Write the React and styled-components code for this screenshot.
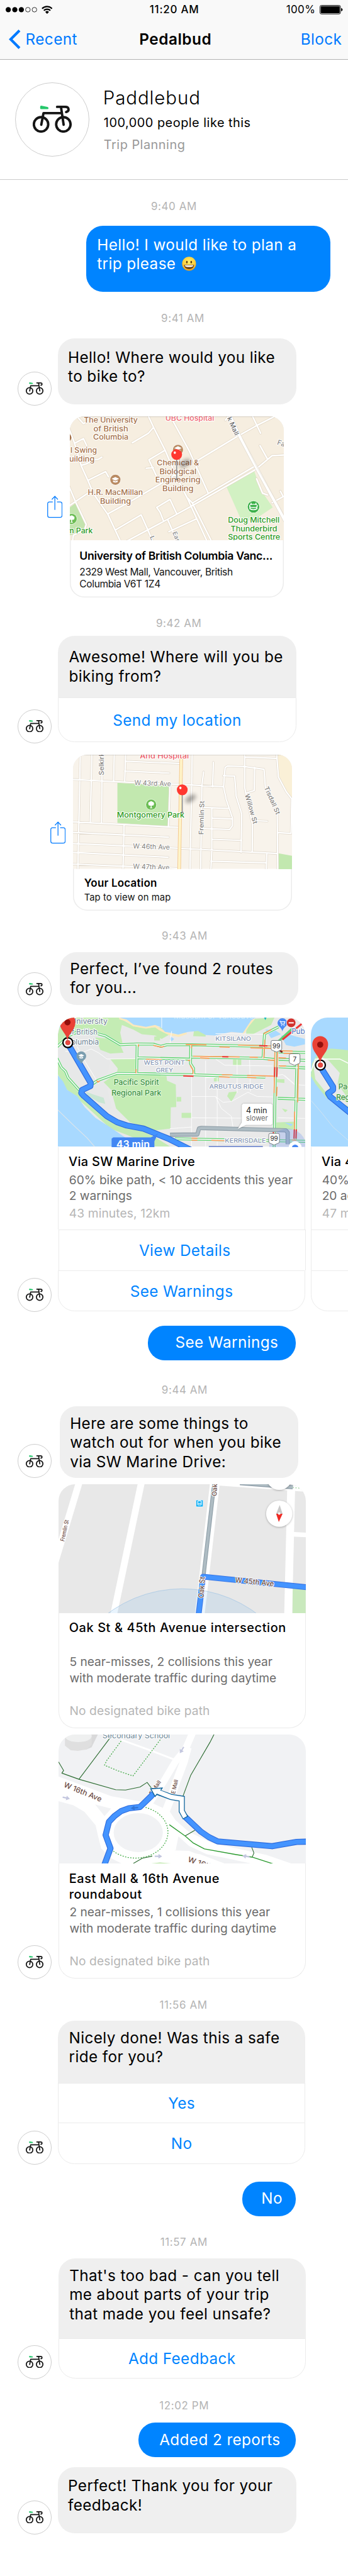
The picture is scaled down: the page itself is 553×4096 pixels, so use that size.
import React from "react";
import styled, { createGlobalStyle, css } from "styled-components";

/* ------------------------------------------------------------------ */
/* Theme                                                               */
/* ------------------------------------------------------------------ */

const color = {
  blue: "#0084ff",
  navBlue: "#007aff",
  bubble: "#efefef",
  line: "#ebebeb",
  time: "#b4b4b4",
  body: "#6c6c6c",
  meta: "#b6b6b6",
};

const font = `Inter, "Liberation Sans", sans-serif`;

const GlobalStyle = createGlobalStyle`
  * { box-sizing: border-box; }
  html, body { margin: 0; background: #fff; overflow-x: hidden; }
  body { font-family: ${font}; color: #000; }
  svg { display: block; flex: none; }
`;

/* The thread is authored on a 750 unit wide artboard. */
const Screen = styled.main`
  zoom: 0.73775;
  width: 749.5px;
  min-height: 5552px;
  background: #fff;
  overflow: hidden;
`;

/* ------------------------------------------------------------------ */
/* Header                                                              */
/* ------------------------------------------------------------------ */

const Header = styled.header`
  height: 129px;
  background: #f9f9f9;
  border-bottom: 2px solid #b2b2b2;
`;

const Bar = styled.div`
  display: grid;
  grid-template-columns: 1fr auto 1fr;
  align-items: center;
`;

const StatusBar = styled(Bar)`
  height: 41.6px;
  padding: 0 11px 0 12.7px;
  font-size: 23px;
  letter-spacing: 0.6px;
`;

const NavBar = styled(Bar)`
  height: 85px;
  padding: 0 13px 0 19px;
  font-size: 33px;
  letter-spacing: 0.55px;
`;

const Side = styled.div`
  display: flex;
  align-items: center;
  justify-content: ${(p) => (p.$end ? "flex-end" : "flex-start")};
  gap: ${(p) => p.$gap || 0}px;
  color: ${(p) => (p.$link ? color.navBlue : "#000")};
`;

const Clock = styled.span`
  font-weight: 500;
  letter-spacing: 1px;
`;

const NavTitle = styled.h1`
  margin: 0;
  font-size: 33px;
  font-weight: 600;
  letter-spacing: 0.7px;
`;

const Profile = styled.section`
  display: flex;
  height: 258.5px;
  padding: 48px 32px 0;
  gap: 29.5px;
  border-bottom: 2px solid #cbcbcb;
`;

const ProfileText = styled.div`
  padding-top: 10.4px;
`;

const ProfileName = styled.h2`
  margin: 0;
  font-size: 40px;
  line-height: 48px;
  font-weight: 300;
  letter-spacing: 1.2px;
`;

const ProfileLine = styled.p`
  margin: 11.4px 0 0 1.5px;
  font-size: 27px;
  line-height: 36px;
  font-weight: 400;
  letter-spacing: 0.66px;
  color: ${(p) => (p.$muted ? "#999" : "#000")};
`;

/* ------------------------------------------------------------------ */
/* Thread                                                              */
/* ------------------------------------------------------------------ */

const Time = styled.time`
  display: block;
  margin-top: ${(p) => p.$top}px;
  padding-left: ${(p) => p.$shift || 0}px;
  font-size: 23px;
  line-height: 28px;
  letter-spacing: 0.8px;
  text-align: center;
  color: ${color.time};
`;

const Row = styled.div`
  display: flex;
  align-items: ${(p) => p.$align || "flex-end"};
  margin-top: ${(p) => p.$top}px;
  padding-left: ${(p) => p.$left ?? 38.3}px;
  gap: ${(p) => p.$gap ?? 13.5}px;
`;

const UserRow = styled.div`
  display: flex;
  justify-content: flex-end;
  margin-top: ${(p) => p.$top}px;
  padding-right: ${(p) => p.$right ?? 112}px;
`;

const AvatarRing = styled.div`
  flex: none;
  display: grid;
  place-items: center;
  width: ${(p) => p.$size}px;
  height: ${(p) => p.$size}px;
  margin-bottom: ${(p) => p.$drop || 0}px;
  border: 1.4px solid #cdcdcd;
  border-radius: 50%;
`;

const messageText = css`
  font-size: 33px;
  line-height: 41.6px;
  letter-spacing: 0.52px;
  white-space: pre-line;
`;

const BotBubble = styled.div`
  width: 513.2px;
  height: ${(p) => p.$height}px;
  padding: ${(p) => p.$pad}px 10px 0 21.5px;
  background: ${color.bubble};
  border-radius: 36px;
  ${messageText}
`;

const UserBubble = styled.div`
  width: ${(p) => p.$width}px;
  height: 74.8px;
  padding: 15.8px ${(p) => p.$end}px 0 0;
  background: ${color.blue};
  border-radius: 36px;
  color: #fff;
  text-align: right;
  ${messageText}
`;

const UserParagraph = styled(UserBubble)`
  height: 141.7px;
  padding: 19.5px 20px 0 23.5px;
  text-align: left;
`;

const InlineEmoji = styled.span`
  display: inline-block;
  vertical-align: -4px;
  margin-left: 3px;
`;

const Prompt = styled.div`
  width: ${(p) => p.$width}px;
`;

const PromptText = styled.div`
  height: ${(p) => p.$height}px;
  padding: ${(p) => p.$pad}px 10px 0 23.5px;
  background: ${color.bubble};
  border-radius: 36px 36px 0 0;
  ${messageText}
`;

const Action = styled.button`
  display: flex;
  align-items: center;
  justify-content: center;
  width: 100%;
  height: ${(p) => p.$height}px;
  margin: 0 0 0 ${(p) => p.$nudge || 0}px;
  padding: 0 0 0 ${(p) => p.$indent || 0}px;
  background: #fff;
  border: 2px solid ${color.line};
  border-bottom-width: ${(p) => (p.$last ? 2 : 0)}px;
  border-radius: ${(p) => (p.$last ? "0 0 36px 36px" : 0)};
  font: 400 33px ${font};
  letter-spacing: 0.5px;
  color: ${color.blue};
`;

/* Location card */

const PlaceCard = styled.article`
  width: ${(p) => p.$width}px;
  height: ${(p) => p.$height}px;
  border-radius: 31px;
  overflow: hidden;
  background: #fff;
  box-shadow: inset 0 0 0 2px #ececec;
`;

const PlaceCaption = styled.div`
  padding: ${(p) => (p.$small ? 15.9 : 19.2)}px 0 0 ${(p) => (p.$small ? 23.5 : 21)}px;
  white-space: nowrap;
`;

const PlaceTitle = styled.h3`
  margin: 0;
  font-size: ${(p) => (p.$small ? 23 : 24)}px;
  line-height: 30px;
  font-weight: 600;
  letter-spacing: ${(p) => (p.$small ? 0.3 : -0.43)}px;
`;

const PlaceAddress = styled.p`
  margin: ${(p) => (p.$small ? 3.5 : 5.8)}px 0 0;
  font-size: ${(p) => (p.$small ? 20 : 21)}px;
  line-height: 26px;
  letter-spacing: ${(p) => (p.$small ? 0.12 : -0.45)}px;
  white-space: pre-line;
  color: #111;
`;

/* Route and warning cards */

const Carousel = styled.div`
  display: flex;
  gap: 12.4px;
`;

const InfoCard = styled.article`
  flex: none;
  width: 532.4px;
`;

const Media = styled.div`
  height: 278px;
  border-radius: 36px 36px 0 0;
  overflow: hidden;
`;

const InfoBody = styled.div`
  height: ${(p) => p.$height}px;
  padding: 15.3px 0 0 21.5px;
  border: solid ${color.line};
  border-width: 0 2px ${(p) => (p.$closed ? 2 : 0)}px;
  border-radius: ${(p) => (p.$closed ? "0 0 36px 36px" : 0)};
  white-space: pre-line;
`;

const InfoTitle = styled.h3`
  margin: 0;
  min-height: ${(p) => (p.$tall ? 68 : 34)}px;
  font-size: 27px;
  line-height: 34px;
  font-weight: 500;
  letter-spacing: ${(p) => (p.$tall ? 0.84 : 0.4)}px;
`;

const InfoText = styled.p`
  margin: ${(p) => (p.$tall ? 4.8 : 5.8)}px 0 0 1px;
  font-size: 26px;
  line-height: ${(p) => (p.$tall ? 35 : 33)}px;
  letter-spacing: -0.04px;
  color: ${color.body};
`;

const InfoMeta = styled(InfoText)`
  margin-top: ${(p) => (p.$tall ? 35.5 : 5)}px;
  letter-spacing: 0.15px;
  color: ${color.meta};
`;

/* ------------------------------------------------------------------ */
/* Icons                                                               */
/* ------------------------------------------------------------------ */

const Bike = ({ width }) => (
  <svg width={width} height={(width * 58.6) / 84} viewBox="0 0 84 58.6">
    <path d="M16 2.2Q16 0 18.4.1L31.6 2.6Q34 3.2 34 5.3T31.8 7.6H18.2Q16 7.6 16 5.4Z" fill="#25c76b" />
    <g fill="none" stroke="#151515" strokeWidth="5.2" strokeLinecap="round" strokeLinejoin="round">
      <circle cx="17.9" cy="40.3" r="15.5" />
      <circle cx="66" cy="40.3" r="15.5" />
      <path d="M18.4 41.2 23.2 16H63M60.9 3 66.6 41.2" />
      <path d="M52.5 2.6H70C78.800 2.6 79.500 12 72 13.600" />
    </g>
  </svg>
);

const Avatar = ({ drop = -1.6 }) => (
  <AvatarRing $size={73.2} $drop={drop}>
    <Bike width={38} />
  </AvatarRing>
);

const Signal = () => (
  <svg width="69" height="12" viewBox="0 0 69 12">
    {[0, 1, 2].map((i) => <circle key={i} cx={5.6 + i * 14.1} cy="6" r="5.6" />)}
    {[3, 4].map((i) => <circle key={i} cx={5.6 + i * 14.1} cy="6" r="5" fill="none" stroke="#000" strokeWidth="1.1" />)}
  </svg>
);

const Wifi = () => (
  <svg width="24" height="18" viewBox="0 0 24 18">
    <g fill="none" stroke="#000" strokeWidth="3">
      <path d="M1.200 6.400A15.300 15.300 0 0 1 22.800 6.400" />
      <path d="M5 10.600A9.900 9.900 0 0 1 19 10.600" />
    </g>
    <path d="M12 17.800 8 13.400A5.800 5.800 0 0 1 16 13.400Z" />
  </svg>
);

const Battery = () => (
  <svg width="50" height="20" viewBox="0 0 50 20">
    <rect x=".7" y=".7" width="44" height="18.600" rx="3" fill="none" stroke="#000" strokeWidth="1.3" />
    <rect x="2.300" y="2.300" width="40.800" height="15.400" rx="1.400" />
    <path d="M46.300 6.600Q49.500 7.600 49.500 10T46.300 13.400Z" />
  </svg>
);

const Chevron = () => (
  <svg width="26" height="42" viewBox="0 0 26 42">
    <path d="M23 2 4 21 23 40" fill="none" stroke={color.navBlue} strokeWidth="5.600" />
  </svg>
);

const Share = () => (
  <svg width="33" height="48" viewBox="0 0 33 48">
    <g fill="none" stroke={color.navBlue} strokeWidth="1.700">
      <path d="M12 13.800H5Q1 13.800 1 17.800V43Q1 47 5 47H28Q32 47 32 43V17.800Q32 13.800 28 13.800H21" />
      <path d="M16.500 31V1.500M10 8.500 16.500 1.500 23 8.500" />
    </g>
  </svg>
);

const Grin = () => (
  <svg width="31" height="31" viewBox="0 0 31 31">
    <defs>
      <radialGradient id="grin" cx="50%" cy="35%" r="65%">
        <stop offset="0" stopColor="#ffef6b" />
        <stop offset=".65" stopColor="#fdcf3c" />
        <stop offset="1" stopColor="#e59a1c" />
      </radialGradient>
    </defs>
    <circle cx="15.500" cy="15.500" r="15" fill="url(#grin)" />
    <ellipse cx="10.800" cy="12" rx="1.800" ry="2.800" fill="#5e3a12" />
    <ellipse cx="20.200" cy="12" rx="1.800" ry="2.800" fill="#5e3a12" />
    <path d="M4.500 17.500H26.500Q25.500 27 15.500 27T4.500 17.500Z" fill="#6b4317" />
    <path d="M6 18.500H25Q24.500 22.500 15.500 22.500T6 18.500Z" fill="#fff" />
  </svg>
);

/* ------------------------------------------------------------------ */
/* Map drawing helpers                                                 */
/* ------------------------------------------------------------------ */

/* Turns survey coordinates into artboard units. */
const survey = (ox, oy, kx, ky) => {
  const x = (v) => +((v - ox) / kx).toFixed(2);
  const y = (v) => +((v - oy) / ky).toFixed(2);
  const d = (lines) =>
    lines
      .split("|")
      .map((line) => "M" + line.trim().split(/\s+/).map((p) => {
        const [a, b] = p.split(",");
        return `${x(+a)} ${y(+b)}`;
      }).join("L"))
      .join("");
  return { x, y, d, w: (v) => v / kx };
};

const Line = ({ m, p, c = "#fff", w = 2, ...rest }) => (
  <path d={m.d(p)} fill="none" stroke={c} strokeWidth={w} strokeLinejoin="round" {...rest} />
);

const Area = ({ m, p, c }) => <path d={m.d(p)} fill={c} />;

const Road = ({ m, p, edge, w = 3.4, c = "#fff" }) => (
  <>
    <Line m={m} p={p} c={edge} w={w + 1.8} strokeLinecap="round" />
    <Line m={m} p={p} c={c} w={w} strokeLinecap="round" />
  </>
);

const Label = ({ m, at, to, y, s = 16, c, w = 500, halo = "#fff", hw = 3, children, ...rest }) => (
  <text
    x={m.x(at)} y={m.y(y)} fontSize={s} fontWeight={w} fill={c} fontFamily="Inter, sans-serif"
    textLength={to ? m.w(to - at) : undefined} lengthAdjust="spacingAndGlyphs"
    stroke={halo} strokeWidth={halo === "none" ? 0 : hw} strokeLinejoin="round" paintOrder="stroke" {...rest}
  >
    {children}
  </text>
);

const Turned = ({ m, x, y, angle, len, s = 13, c, children }) => (
  <text
    transform={`translate(${m.x(x)} ${m.y(y)}) rotate(${angle})`} fontSize={s} fontWeight="500" fill={c}
    fontFamily="Inter, sans-serif" textLength={len} lengthAdjust="spacingAndGlyphs"
    stroke="#fff" strokeWidth="2.600" strokeLinejoin="round" paintOrder="stroke"
  >
    {children}
  </text>
);

const DropPin = ({ x, y, foot }) => (
  <g>
    <ellipse cx={x + 18} cy={y + 19} rx="13" ry="6" fill="#000" opacity=".38" transform={`rotate(-35 ${x + 18} ${y + 19})`} style={{ filter: "blur(4px)" }} />
    <path d={`M${x} ${y + 10}V${foot}`} stroke="#8d9196" strokeWidth="2.200" />
    <path d={`M${x - 3} ${foot}H${x + 3}`} stroke="#444" strokeWidth="1.200" />
    <circle cx={x} cy={y} r="11.600" fill="#ff3830" />
    <ellipse cx={x - 4} cy={y - 4} rx="2.400" ry="2.800" fill="#fff" />
  </g>
);

const Cap = ({ x, y, k = 1 }) => (
  <g transform={`translate(${x} ${y}) scale(${k})`} fill="#fff">
    <path d="M-8-2 0-6 8-2 0 2ZM-5 1.200V4.500Q0 7.500 5 4.500V1.200L0 3.700Z" />
  </g>
);

const Poi = ({ x, y, r = 11, c, children }) => (
  <g>
    <circle cx={x} cy={y} r={r + 1} fill="#fff" opacity=".7" />
    <circle cx={x} cy={y} r={r} fill={c} />
    {children}
  </g>
);

const Tree = ({ x, y }) => (
  <g transform={`translate(${x} ${y})`} fill="#fff">
    <path d="M-6-1A4 4 0 0 1-3-6 4 4 0 0 1 3-6 4 4 0 0 1 6-1 3 3 0 0 1 3 2H1V7H3V8H-3V7H-1V2H-3A3 3 0 0 1-6-1Z" />
  </g>
);

/* ------------------------------------------------------------------ */
/* Campus map                                                          */
/* ------------------------------------------------------------------ */

const campus = survey(314, 51, 2.0907, 3);

const CampusMap = () => {
  const m = campus;
  const brown = "#a5714a";
  const green = "#2c9a1c";
  const roads =
    "668,51 691,122 743,270 790,430 843,580 885,712 930,853|691,122 668,160 595,222|743,270 670,332 708,450|658,387 690,382" +
    "|770,60 850,270 938,550|845,580 865,610 950,853|345,51 375,98 392,85|300,90 335,225 365,370 395,465 420,550 485,685 540,853" +
    "|335,225 375,195 390,240|365,368 395,355 410,332 440,330 458,315|395,465 475,408 488,442|485,682 600,590 720,490" +
    "|720,490 790,425|890,335 1060,188 1150,115 1245,45|560,866 750,720 870,625 1150,395 1225,305 1285,300|870,608 1145,375" +
    "|300,640 395,548|300,470 340,605 388,750 380,785 330,820 325,870|520,785 635,688 662,775 690,870|795,680 765,588 705,640 720,670 735,725" +
    "|755,720 800,870|760,797 885,713|1170,240 1202,322|1135,45 1173,160|1225,610 1275,570 1262,535|1155,455 1182,548 1205,560|1015,75 1035,40";
  return (
    <svg width="461.6" height="267.4" viewBox="0 0 461.6 267.4">
      <rect width="462" height="268" fill="#f6eee0" />
      <Area m={m} p="314,640 340,612 388,748 382,770 330,815 314,820" c="#c3e4ae" />
      <Area m={m} p="1143,400 1020,508 1070,670 1090,735 1150,715 1228,640 1185,550 1158,460" c="#d2f1c3" />
      <Road m={m} p={roads} edge="#e0d5c3" />
      <Road m={m} p="1035,45 1075,170 1155,385 1290,745" edge="#ded6ca" w={6} />
      <Line m={m} p="1090,190 1160,390 1290,715" c="#e6dfd4" w={1} />
      <Poi x={m.x(801)} y={m.y(268)} c="#b98b63"><Cap x={m.x(801)} y={m.y(262)} /></Poi>
      <Poi x={m.x(519)} y={m.y(461)} c="#b98b63"><Cap x={m.x(519)} y={m.y(461)} /></Poi>
      <Poi x={m.x(1141)} y={m.y(636)} r={12.500} c="#3cb04a">
        <ellipse cx={m.x(1141)} cy={m.y(630)} rx="8.500" ry="3.500" fill="none" stroke="#fff" strokeWidth="1.800" />
        <path d={`M${m.x(1125)} ${m.y(634)}v5q7.500 4 15 0v-5M${m.x(1130)} ${m.y(622)}v-4M${m.x(1152)} ${m.y(622)}v-4`} fill="none" stroke="#fff" strokeWidth="2.200" />
      </Poi>
      <Poi x={m.x(322)} y={m.y(714)} c="#6cbd54"><Tree x={m.x(322)} y={m.y(714)} /></Poi>
      <circle cx={m.x(302)} cy={m.y(188)} r="9" fill={brown} />
      <Label m={m} at={377} to={620} y={93} c={brown}>The University</Label>
      <Label m={m} at={420} to={577} y={148} c={brown}>of British</Label>
      <Label m={m} at={419} to={578} y={203} c={brown}>Columbia</Label>
      <Label m={m} at={744} to={964} y={80} c="#ef6671">UBC Hospital</Label>
      <Label m={m} at={317} to={436} y={288} c={brown}>l Swing</Label>
      <Label m={m} at={311} to={425} y={344} c={brown}>uilding</Label>
      <Label m={m} at={395} to={643} y={561} c={brown}>H.R. MacMillan</Label>
      <Label m={m} at={450} to={589} y={617} c={brown}>Building</Label>
      <Label m={m} at={706} to={895} y={368} c={brown}>Chemical &amp;</Label>
      <Label m={m} at={718} to={884} y={424} c={brown}>Biological</Label>
      <Label m={m} at={699} to={902} y={480} c={brown}>Engineering</Label>
      <Label m={m} at={731} to={871} y={535} c={brown}>Building</Label>
      <Label m={m} at={1026} to={1258} y={739} c={green}>Doug Mitchell</Label>
      <Label m={m} at={1038} to={1248} y={795} c={green}>Thunderbird</Label>
      <Label m={m} at={1026} to={1261} y={850} c={green}>Sports Centre</Label>
      <Label m={m} at={302} to={417} y={806} c={green}>m Park</Label>
      <Turned m={m} x={1246} y={232} angle={18} len={17} s={15} c="#8a8a8a">Fa</Turned>
      <Turned m={m} x={1022} y={62} angle={66} len={42} s={14} c="#6b6b6b">k Mall</Turned>
      <Turned m={m} x={776} y={802} angle={68} len={24} s={13} c="#8a8a8a">Eas</Turned>
      <Turned m={m} x={674} y={830} angle={68} len={9} s={13} c="#8a8a8a">L</Turned>
      <DropPin x={m.x(795)} y={m.y(298)} foot={m.y(458)} />
      <path d="M0 .8H462" stroke="#000" strokeOpacity=".1" strokeWidth="1.600" />
    </svg>
  );
};

/* ------------------------------------------------------------------ */
/* Montgomery Park map                                                 */
/* ------------------------------------------------------------------ */

const home = survey(330, 81, 2.0907, 3);

const HomeMap = () => {
  const m = home;
  const gray = "#85827d";
  const roads =
    "363,70 352,830|415,70 408,515|462,70 458,518|516,70 513,252|567,70 563,250|867,70 857,830|918,192 910,290 905,830|962,130 959,290" +
    "|320,240 520,255 790,272 1008,288|320,515 560,533 805,551|320,583 560,600 760,614|320,655 560,670 860,690 1250,720|320,712 560,730 758,744" +
    "|320,788 560,802 810,817|567,123 812,138|563,187 763,200|767,285 760,545|560,533 555,830" +
    "|1103,70 1103,290 1108,330 1146,313 1148,162|1008,288 1015,165 1025,155 1103,158 1190,175 1197,300 1250,470 1252,830" +
    "|1008,288 1020,370 1048,490 1048,540 1035,565 955,560 915,556|1007,217 1058,220 1065,350 1090,465 1087,712|915,422 1028,428" +
    "|955,428 955,700 951,830|955,490 1045,496|955,628 1090,635|1103,97 1245,105|1247,70 1255,225 1290,320 1325,385|1108,330 1138,530 1137,705" +
    "|1155,508 1205,511|1252,585 1312,590 1315,370|951,770 1200,780|1203,720 1200,830";
  return (
    <svg width="471.7" height="246" viewBox="0 0 471.7 246">
      <rect width="472" height="246" fill="#f8f3eb" />
      <Area m={m} p="1250,81 1320,81 1320,375 1288,315 1255,225" c="#faf0d7" />
      <Area m={m} p="1254,718 1320,736 1320,822 1254,822" c="#c2e8af" />
      <Area m={m} p="530,263 762,282 757,543 530,522" c="#c2e8af" />
      <Road m={m} p={roads} edge="#dfd7cb" w={3} />
      <Line m={m} p="818,70 808,830" c="#f3c991" w={7.600} />
      <Line m={m} p="818,70 808,830" c="#fff4c8" w={5} />
      <Poi x={m.x(682)} y={m.y(404)} c="#6cbd54"><Tree x={m.x(682)} y={m.y(404)} /></Poi>
      <Label m={m} at={631} to={852} y={104} c="#ee5e68">And Hospital</Label>
      <Label m={m} at={606} to={771} y={277} s={15} w={400} c={gray} transform={`rotate(2 ${m.x(606)} ${m.y(277)})`}>W 43rd Ave</Label>
      <Label m={m} at={600} to={766} y={687} s={15} w={400} c={gray} transform={`rotate(2 ${m.x(600)} ${m.y(687)})`}>W 46th Ave</Label>
      <Label m={m} at={600} to={764} y={818} s={15} w={400} c={gray} transform={`rotate(2 ${m.x(600)} ${m.y(818)})`}>W 47th Ave</Label>
      <Label m={m} at={528} to={832} y={489} s={16.500} c="#2f9a1c">Montgomery Park</Label>
      <Turned m={m} x={470} y={214} angle={-90} len={49} s={13.500} c={gray}>Selkirk</Turned>
      <Turned m={m} x={917} y={598} angle={-88.500} len={73} s={14} c={gray}>Fremlin St</Turned>
      <Turned m={m} x={1104} y={340} angle={74} len={66} s={14} c={gray}>Willow St</Turned>
      <Turned m={m} x={1190} y={293} angle={66} len={65} s={14} c={gray}>Tisdall St</Turned>
      <DropPin x={m.x(822)} y={m.y(308)} foot={m.y(455)} />
      <path d="M0 .8H472" stroke="#000" strokeOpacity=".1" strokeWidth="1.600" />
    </svg>
  );
};

/* ------------------------------------------------------------------ */
/* Route maps                                                          */
/* ------------------------------------------------------------------ */

const G = "#62d273";
const O = "#ff9d5c";
const R = "#ee3434";

const GooglePin = ({ x, y }) => (
  <g transform={`translate(${x} ${y})`}>
    <path d="M0 0C-1.500-18-17-24-17-42A17 17.500 0 0 1 17-42C17-24 1.500-18 0 0Z" fill="#ea4236" />
    <circle cy="-41" r="6.600" fill="#920f0c" />
  </g>
);

const Origin = ({ x, y }) => (
  <g>
    <circle cx={x} cy={y} r="10.600" fill="#fff" stroke="#000" strokeWidth="3" />
    <circle cx={x} cy={y} r="5.200" fill="#e8483f" stroke="#b5332c" strokeWidth=".8" />
  </g>
);

const Shield = ({ x, y, children }) => (
  <g transform={`translate(${x} ${y})`}>
    <path d="M-11.500-9Q-11.500-12-8.500-12H8.500Q11.500-12 11.500-9V6Q11.500 9 8 9.500L0 13-8 9.500Q-11.500 9-11.500 6Z" fill="#fff" stroke="#74797d" strokeWidth="1.300" />
    <text y="4.600" textAnchor="middle" fontSize="13.500" fontFamily="Inter, sans-serif" fill="#222">{children}</text>
  </g>
);

const Bluepath = ({ m, p, w = 12.500, c = "#4494ff", edge = "#2e6bdc" }) => (
  <>
    <Line m={m} p={p} c={edge} w={w} />
    <Line m={m} p={p} c={c} w={w - 3} />
  </>
);

const marine = survey(14, 12, 2.8, 3);

const MarineMap = () => {
  const m = marine;
  const area = "#8797b4";
  const park = "#c4ecb4";
  const water = "#a8d9ff";
  const double =
    "0,210 80,128 120,110 250,115 300,130 390,188 490,183 590,184 635,198 670,188 820,188 1250,198 1310,204|492,185 489,372" +
    "|815,192 814,310 832,340 834,382|495,272 810,281|820,267 1250,275 1320,283|225,440 255,418 370,373 490,374 830,382 1265,397" +
    "|8,275 35,335 60,360 75,400 150,490|1328,230 1318,860|1455,310 1445,800|1251,275 1260,118 1345,72|1345,234 1510,238|1345,282 1510,289" +
    "|1345,330 1510,338|1340,534 1510,541|720,796 1510,812";
  const minor =
    "130,200 180,300 260,440|60,230 170,235 215,215 260,240 310,280 490,278|640,12 640,80|905,290 905,846|820,290 820,846|975,400 975,846" +
    "|1095,280 1095,500|1170,285 1175,490|820,522 965,522 1010,560 1060,555 1160,495 1215,522 1310,525|820,660 1310,664|690,730 820,720" +
    "|965,522 1000,600 1060,650 1070,720|965,280 1020,320 1310,325|1340,660 1504,664|965,116 1130,118 1260,120|1380,385 1440,440|700,100 690,180" +
    "|1340,385 1370,380 1440,445 1504,450|905,400 965,400";
  return (
    <svg width="532.4" height="278" viewBox="0 0 532.4 278">
      <rect width="533" height="278" fill="#e9e9e9" />
      <Area m={m} p="40,12 380,12 470,68 545,80 600,75 640,75 690,120 640,150 600,128 520,120 470,90 400,60 390,110 405,185 300,150 240,110 130,100 60,130 14,190 14,120" c={park} />
      <Area m={m} p="210,115 300,130 390,190 410,240 290,240 230,190" c={park} />
      <Area m={m} p="60,180 130,130 260,120 380,190 300,260 330,300 300,420 340,600 300,610 170,500 60,360 14,260 14,230" c="#e7e8e8" />
      <Area m={m} p="240,140 330,150 390,192 400,240 330,245 270,220" c={park} />
      <Area m={m} p="330,280 480,276 488,368 668,378 672,420 725,445 728,590 695,592 693,730 600,742 450,690 365,600 335,480 290,430 370,372 375,340" c={park} />
      <Area m={m} p="14,290 60,365 120,460 200,540 330,660 470,720 600,785 690,846 600,846 430,770 330,730 180,580 60,470 14,380" c={park} />
      <Area m={m} p="180,490 230,510 290,530 300,570 260,560 200,520" c="#c9e6d3" />
      <Area m={m} p="760,628 818,628 818,661 760,661|1070,278 1120,274 1120,320 1070,320|955,400 985,400 985,425 955,425|835,95 905,92 905,135 830,132|1045,495 1095,490 1075,530 1060,555 1035,520|1330,690 1440,685 1440,735 1330,735|1365,600 1400,610 1385,625|1325,410 1380,410 1380,435 1325,430|730,525 758,525 758,555 730,555|595,135 630,132 630,160 595,160|1150,70 1200,20 1320,12 1300,60 1190,120 1150,120" c={park} />
      <Line m={m} p="385,15 430,30 470,62 545,76 600,66 632,90 690,120 742,130 790,112" c="#fbe9bd" w={5} />
      <Line m={m} p="1130,118 1165,60 1200,14" c="#fbe9bd" w={4} />
      <Area m={m} p="385,12 430,25 470,58 545,72 600,60 632,72 660,105 700,112 740,122 800,105 860,98 905,125 960,128 1060,105 1130,112 1155,70 1180,30 1205,12" c={water} />
      <Area m={m} p="14,12 62,12 30,70 14,85" c={water} />
      <Area m={m} p="14,385 45,425 70,480 130,520 175,590 240,660 320,715 430,795 480,846 14,846" c={water} />
      <Area m={m} p="1265,90 1320,90 1360,120 1300,145|1360,130 1400,120 1504,150 1504,185 1440,200 1390,190|695,135 715,150 700,165 690,150|1380,690 1430,700 1420,715" c={water} />
      <Line m={m} p="0,595 110,710 190,790 235,846" c="#dfe5ea" w={1.500} />
      <Line m={m} p={minor} c="#fff" w={1.200} />
      <Line m={m} p={double} c="#fff" w={7.200} />
      <Line m={m} p={double} c={G} w={6.200} />
      <Line m={m} p={double} c="#f1f6f1" w={2.600} />
      <Line m={m} p="785,186 910,188|590,192 640,203 655,198|1100,190 1300,195|988,202 1050,204|1175,208 1310,212|500,185 500,200|820,192 820,210|545,282 640,284|830,262 1110,267|872,273 928,276|1170,268 1220,270|1280,287 1318,288|797,289 812,290|812,320 830,355 828,378|486,345 484,372|1003,381 1068,383|985,395 1050,398|1155,385 1315,391|1155,399 1210,401|248,418 255,430 268,420|1323,235 1321,330 1318,500|1338,235 1336,330|1336,460 1333,520|1465,310 1460,560|1442,620 1440,740|1262,155 1256,275|1255,118 1300,90|1350,227 1430,229|1375,243 1430,244|1345,272 1390,274|1350,325 1390,326|820,791 855,792|820,805 855,806|940,806 1020,808|1040,795 1160,798|1425,803 1452,805|145,475 148,490" c={O} w={2.300} />
      <Line m={m} p="1228,194 1278,195|1005,265 1042,266|770,389 832,391|1322,332 1320,396|1336,332 1334,396|1440,735 1438,795|1452,735 1450,795|1314,750 1313,765" c={R} w={2.800} />
      <Line m={m} p="1352,225 1368,236" c="#7b1d1d" w={3.500} />
      <Line m={m} p="1345,165 1432,80" c={G} w={5} />
      <Line m={m} p="1368,155 1485,52" c={R} w={4} />
      <Bluepath m={m} p="690,770 855,768 865,729 880,726 1388,741 1400,755 1400,830" w={9} c="#aebcc3" edge="#8e9da6" />
      <Bluepath m={m} p="82,195 212,435 210,455 160,480 155,500 170,518 310,650 370,688 430,710 530,730 680,795 820,870" w={13} />
      <Area m={m} p="338,795 348,787 575,787 618,760 596,812 596,850 338,850" c="#4286f3" />
      <Label m={m} at={366} to={568} y={853} s={22} w={600} c="#fff" halo="none">43 min</Label>
      <g style={{ filter: "drop-shadow(0 1px 1.500px rgba(0,0,0,.35))" }}>
        <Area m={m} p="1132,568 1300,568 1308,577 1308,698 1300,706 1148,706 1098,733 1123,690 1123,577" c="#fff" />
      </g>
      <Label m={m} at={1149} to={1276} y={632} s={17} w={400} c="#222" halo="none">4 min</Label>
      <Label m={m} at={1149} to={1281} y={679} s={15} w={400} c="#6e6e6e" halo="none">slower</Label>
      <Label m={m} at={90} to={314} y={54} w={400} c="#6b7f92">University</Label>
      <Label m={m} at={72} to={253} y={121} w={400} c="#6b7f92">of British</Label>
      <Label m={m} at={62} to={261} y={188} w={400} c="#6b7f92">Columbia</Label>
      <Label m={m} at={712} to={1214} y={19} w={400} c="#d3ecfb" halo="none">Museum of Vancouver</Label>
      <Label m={m} at={964} to={1179} y={163} s={13} c={area}>KITSILANO</Label>
      <Label m={m} at={532} to={780} y={318} s={13} c={area}>WEST POINT</Label>
      <Label m={m} at={605} to={709} y={364} s={13} c={area}>GREY</Label>
      <Label m={m} at={927} to={1253} y={473} s={13} c={area}>ARBUTUS RIDGE</Label>
      <Label m={m} at={1021} to={1268} y={822} s={13} c={area}>KERRISDALE</Label>
      <Label m={m} at={351} to={623} y={449} w={400} c="#2a8536" halo="#dff5d6">Pacific Spirit</Label>
      <Label m={m} at={338} to={637} y={517} w={400} c="#2a8536" halo="#dff5d6">Regional Park</Label>
      <Label m={m} at={1423} to={1504} y={117} w={400} c="#4a74c0">Pub</Label>
      <path d={`M${m.x(1265)} ${m.y(28)}l-3-6h6z`} fill="#10b5c6" />
      <g transform={`translate(${m.x(1368)} ${m.y(48)})`}>
        <path d="M0 18C-1 10-10.500 7-10.500 0A10.500 10.500 0 0 1 10.500 0C10.500 7 1 10 0 18Z" fill="#4b8cf5" />
        <path d="M-6-4H-4L-2 2H4L5.500-3H-3.500" fill="none" stroke="#fff" strokeWidth="1.600" />
        <circle cx="-1.500" cy="5" r="1.200" fill="#fff" /><circle cx="3.500" cy="5" r="1.200" fill="#fff" />
      </g>
      <circle cx={m.x(1421)} cy={m.y(46)} r="10" fill="#d2322d" stroke="#fff" strokeWidth="1" />
      <rect x={m.x(1421) - 5.500} y={m.y(46) - 1.300} width="11" height="2.600" fill="#fff" />
      <g transform={`translate(${m.x(155)} ${m.y(262)})`}>
        <path d="M0 18C-1 10-10.500 7-10.500 0A10.500 10.500 0 0 1 10.500 0C10.500 7 1 10 0 18Z" fill="#7b9eaf" />
        <Cap x={0} y={0} k={0.8} />
      </g>
      <Shield x={m.x(1332)} y={m.y(196)}>99</Shield>
      <Shield x={m.x(1442)} y={m.y(282)}>7</Shield>
      <circle cx={m.x(1400)} cy={m.y(850)} r="40" fill="#4a7df0" opacity=".22" />
      <Shield x={m.x(1318)} y={m.y(797)}>99</Shield>
      <circle cx={m.x(1445)} cy={m.y(854)} r="14" fill="#fff" />
      <circle cx={m.x(1445)} cy={m.y(854)} r="7" fill="#4486f4" />
      <path d={`M${m.x(924)} 278H${m.x(1250)}`} stroke="#5c78c8" strokeWidth="2" />
      <Origin x={m.x(74)} y={m.y(174)} />
      <GooglePin x={m.x(72)} y={m.y(166)} />
    </svg>
  );
};

const alternate = survey(1400, 582, 2.0907, 3);

const AlternateMap = () => {
  const m = alternate;
  return (
    <svg width="532.4" height="278" viewBox="0 0 532.4 278">
      <rect width="533" height="278" fill="#a8d9ff" />
      <Area m={m} p="1400,960 1405,880 1430,820 1490,782 1540,788 1600,800 1600,1230 1530,1150 1470,1100 1420,1010" c="#c4ecb4" />
      <Area m={m} p="1410,880 1440,830 1480,860 1530,940 1520,1010 1560,1090 1600,1180 1520,1120 1470,1070 1420,980" c="#e9e9ea" />
      <Line m={m} p="1400,930 1420,850 1480,850 1530,850 1600,900" w={2} />
      <Line m={m} p="1402,1120 1450,1200 1500,1290 1600,1416" c="#d5e4ef" w={1.200} />
      <Bluepath m={m} p="1445,905 1500,1030 1500,1050 1478,1072 1486,1092 1600,1225" w={13} />
      <Label m={m} at={1524} y={1047} w={400} c="#2a8536" halo="#dff5d6">Pacific Spirit</Label>
      <Label m={m} at={1514} y={1115} w={400} c="#2a8536" halo="#dff5d6">Regional Park</Label>
      <Origin x={m.x(1443)} y={m.y(889)} />
      <GooglePin x={m.x(1442)} y={m.y(880)} />
    </svg>
  );
};

/* ------------------------------------------------------------------ */
/* Intersection map                                                    */
/* ------------------------------------------------------------------ */

const oak = survey(263, 25, 2.0907, 2.8);

const OakMap = () => {
  const m = oak;
  const ink = "#6d4c45";
  return (
    <svg width="532.4" height="278" viewBox="0 0 532.4 278">
      <rect width="533" height="278" fill="#e8e8e8" />
      <Area m={m} p="1317,650 1376,660 1376,810 1317,810" c="#c9e9bd" />
      <Line m={m} p="357,10 240,530" w={14.500} />
      <Line m={m} p="637,10 510,820" w={14.500} />
      <Line m={m} p="968,10 898,820" w={21} />
      <Line m={m} p="980,17 1380,55" w={11} />
      <Line m={m} p="1311,30 1297,820" w={17} />
      <Line m={m} p="1300,326 1380,331" w={10} />
      <Line m={m} p="1318,45 1376,52" c="#8fcb8f" w={2} strokeDasharray="2 4" />
      <Bluepath m={m} p="1080,18 1318,43" c="#aebcc3" edge="#8797a3" w={9} />
      <circle cx={m.x(820)} cy={m.y(656) + 268} r="268" fill="#4aa5ee" fillOpacity=".12" stroke="#a3c6e4" strokeWidth="1" />
      <Bluepath m={m} p="965,10 915,590" c="#aebcc3" edge="#8f9fa8" w={8.500} />
      <Bluepath m={m} p="893,820 914,583 1390,648" c="#4494ff" edge="#3a77e6" w={12.500} />
      <Turned m={m} x={289} y={371} angle={-78} len={47} s={12.500} c={ink}>Fremlin St</Turned>
      <Turned m={m} x={974} y={98} angle={-86} len={27} s={14} c={ink}>Oak</Turned>
      <Turned m={m} x={916} y={713} angle={-86} len={46} s={16} c={ink}>Oak St</Turned>
      <Turned m={m} x={1057} y={617} angle={6} len={84} s={16} c={ink}>W 45th Ave</Turned>
      <rect x={m.x(882)} y={m.y(120)} width="15.400" height="14.800" rx="2" fill="#13b0f5" stroke="#fff" strokeWidth="1" />
      <rect x={m.x(890)} y={m.y(125)} width="7.600" height="9" rx="1.500" fill="none" stroke="#fff" strokeWidth="1.500" />
      <path d={`M${m.x(890)} ${m.y(142)}h7.600`} stroke="#fff" strokeWidth="1.400" />
      <g style={{ filter: "drop-shadow(0 2px 2px rgba(0,0,0,.3))" }}>
        <circle cx={m.x(1257)} cy={m.y(-19)} r="28" fill="#fff" />
        <circle cx={m.x(1257)} cy={m.y(203)} r="28.300" fill="#fff" />
      </g>
      <path d={m.d("1259,150 1272,203 1243,203")} fill="#c9c9c9" />
      <path d={m.d("1255,253 1272,203 1243,203")} fill="#ee2a24" />
      <circle cx={m.x(1257)} cy={m.y(202)} r="2.600" fill="#fff" />
    </svg>
  );
};

/* ------------------------------------------------------------------ */
/* Roundabout map                                                      */
/* ------------------------------------------------------------------ */

const mall = survey(263, 53, 2.0907, 2.8);

const Arrow = ({ m, x, y, angle, c = "#c4c7df" }) => (
  <path
    transform={`translate(${m.x(x)} ${m.y(y)}) rotate(${angle})`}
    d="M-8-1.500H0V-5L8 0 0 5V1.500H-8Z" fill={c}
  />
);

const MallMap = () => {
  const m = mall;
  const ink = "#6d4c45";
  const dark = "#2b6b30";
  return (
    <svg width="532.4" height="278" viewBox="0 0 532.4 278">
      <rect width="533" height="278" fill="#f1f2f4" />
      <path d={m.d("392,53 440,53 412,130 385,145")} fill="#d9d9da" />
      <path d={m.d("292,70 292,120 318,148 350,152 390,143 412,115 412,60")} fill="#dfdfdf" />
      <ellipse cx={m.x(352)} cy={m.y(62)} rx="29" ry="13" fill="#eff0f0" />
      <Area m={m} p="250,300 400,375 500,425 600,450 690,470 740,500 765,520 790,570 850,640 950,705 1080,745 1200,780 1330,840 950,840 860,790 790,750 775,760 740,831 560,840 500,800 455,740 440,660 430,600 380,520 330,480 250,450" c="#fff" />
      <Area m={m} p="428,475 500,500 470,545" c="#f1f2f4" />
      <Area m={m} p="803,668 850,725 930,775 1040,805 1130,831 1010,831 900,775 790,755" c="#f1f2f4" />
      <ellipse cx={m.x(622)} cy={m.y(645)} rx="53" ry="42" fill="#f1f2f4" />
      <Area m={m} p="780,752 850,755 1000,831 700,831 740,800" c="#fff" />
      <Line m={m} p="866,45 835,140 790,215 735,340 690,430 660,490" w={15} />
      <Line m={m} p="845,130 828,215 790,350 768,440 745,520" w={17} />
      <Line m={m} p="545,85 680,150 800,212" w={4} />
      <Area m={m} p="680,831 720,825 770,831" c="#b9e6a5" />
      <Line m={m} p="263,218 286,270 278,286 355,323 520,386 565,388 630,370 662,342 688,388|355,323 494,75|966,45 945,100 858,300 822,430|833,665 877,631|1133,733 1143,768 1135,793|600,831 640,800 685,787" c={dark} w={1.500} />
      <Line m={m} p="762,597 833,665 868,706 920,743 1060,777 1135,793 1235,836" c="#2a9a2e" w={1.800} />
      <Line m={m} p="545,92 480,210 470,238 530,272 598,303 725,78" c="#3aa63d" w={1.700} strokeDasharray="2.600 3" />
      <path
        d={`M${m.x(655)} ${m.y(493)}A70 56 0 1 1 ${m.x(508)} ${m.y(755)}`}
        fill="none" stroke="#3aa63d" strokeWidth="1.700" strokeDasharray="2.600 3"
      />
      <Label m={m} at={461} to={765} y={77} w={400} c="#6b8595">Secondary School</Label>
      <Turned m={m} x={284} y={368} angle={22} len={87} s={16} c={ink}>W 16th Ave</Turned>
      <Turned m={m} x={787} y={413} angle={-77} len={31} s={12} c={ink}>E Mall</Turned>
      <Turned m={m} x={684} y={420} angle={-55} len={35} s={12} c={ink}>E Mall</Turned>
      <Turned m={m} x={843} y={820} angle={18} len={56} s={16} c={ink}>W 16th</Turned>
      <Arrow m={m} x={298} y={436} angle={12} />
      <Arrow m={m} x={818} y={147} angle={122} />
      <Arrow m={m} x={713} y={788} angle={0} />
      <Arrow m={m} x={1107} y={788} angle={190} />
      <Bluepath m={m} p="690,408 680,425 630,490 580,498 545,515 515,545 490,580 475,660 497,740 468,845" w={13} />
      <Arrow m={m} x={605} y={496} angle={175} c="#3375d6" />
      <Bluepath m={m} p="832,548 905,640 940,672 980,698 1225,727 1335,701 1390,699" w={13} />
      <Line m={m} p="835,556 818,515 818,440 770,430 705,398" c="#0d639c" w={13} strokeLinejoin="miter" />
      <path d={m.d("678,380 730,376 722,392 708,410 698,427") + "Z"} fill="#fff" stroke="#0d639c" strokeWidth="2" />
      <Line m={m} p="833,552 818,515 818,440 770,430 702,394" w={9.500} strokeLinejoin="miter" />
    </svg>
  );
};

/* ------------------------------------------------------------------ */
/* Screen                                                              */
/* ------------------------------------------------------------------ */

export default function App() {
  return (
    <>
      <GlobalStyle />
      <Screen>
        <Header>
          <StatusBar>
            <Side $gap={7.500}><Signal /><Wifi /></Side>
            <Clock>11:20 AM</Clock>
            <Side $end $gap={9}>100%<Battery /></Side>
          </StatusBar>
          <NavBar>
            <Side $link $gap={10}><Chevron />Recent</Side>
            <NavTitle>Pedalbud</NavTitle>
            <Side $link $end>Block</Side>
          </NavBar>
        </Header>

        <Profile>
          <AvatarRing $size={160.500}><Bike width={84} /></AvatarRing>
          <ProfileText>
            <ProfileName>Paddlebud</ProfileName>
            <ProfileLine>100,000 people like this</ProfileLine>
            <ProfileLine $muted>Trip Planning</ProfileLine>
          </ProfileText>
        </Profile>

        <Time $top={44.100}>9:40 AM</Time>
        <UserRow $top={27.400} $right={38}>
          <UserParagraph $width={526}>
            {"Hello! I would like to plan a\ntrip please "}
            <InlineEmoji><Grin /></InlineEmoji>
          </UserParagraph>
        </UserRow>

        <Time $top={43.900} $shift={38}>9:41 AM</Time>
        <Row $top={29.100}>
          <Avatar drop={-2.200} />
          <BotBubble $height={142.600} $pad={19.500}>{"Hello! Where would you like\nto bike to?"}</BotBubble>
        </Row>
        <Row $top={24.700} $left={101.200} $gap={16} $align="center">
          <Share />
          <PlaceCard $width={461.600} $height={391.300}>
            <CampusMap />
            <PlaceCaption>
              <PlaceTitle>University of British Columbia Vanc...</PlaceTitle>
              <PlaceAddress>{"2329 West Mall, Vancouver, British\nColumbia V6T 1Z4"}</PlaceAddress>
            </PlaceCaption>
          </PlaceCard>
        </Row>

        <Time $top={41} $shift={21}>9:42 AM</Time>
        <Row $top={12.700}>
          <Avatar drop={-2} />
          <Prompt $width={513.200}>
            <PromptText $height={134} $pad={25}>{"Awesome! Where will you be\nbiking from?"}</PromptText>
            <Action $height={95.700} $last>Send my location</Action>
          </Prompt>
        </Row>
        <Row $top={27.300} $left={108.200} $gap={16.600} $align="center">
          <Share />
          <PlaceCard $width={471.700} $height={335.700}>
            <HomeMap />
            <PlaceCaption $small>
              <PlaceTitle $small>Your Location</PlaceTitle>
              <PlaceAddress $small>Tap to view on map</PlaceAddress>
            </PlaceCaption>
          </PlaceCard>
        </Row>

        <Time $top={40.600} $shift={46}>9:43 AM</Time>
        <Row $top={20.700} $gap={17.700}>
          <Avatar drop={-3} />
          <BotBubble $height={113.700} $pad={15}>{"Perfect, I’ve found 2 routes\nfor you..."}</BotBubble>
        </Row>
        <Row $top={28.300}>
          <Avatar drop={-0.500} />
          <Carousel>
            <InfoCard>
              <Media><MarineMap /></Media>
              <InfoBody $height={178}>
                <InfoTitle>Via SW Marine Drive</InfoTitle>
                <InfoText>{"60% bike path, < 10 accidents this year\n2 warnings"}</InfoText>
                <InfoMeta>43 minutes, 12km</InfoMeta>
              </InfoBody>
              <Action $height={88} $nudge={1.500} $indent={11}>View Details</Action>
              <Action $height={89} $last>See Warnings</Action>
            </InfoCard>
            <InfoCard>
              <Media><AlternateMap /></Media>
              <InfoBody $height={178}>
                <InfoTitle>Via 41st Avenue</InfoTitle>
                <InfoText>{"40% bike path,\n20 accidents this year"}</InfoText>
                <InfoMeta>47 minutes</InfoMeta>
              </InfoBody>
              <Action $height={88} />
              <Action $height={89} $last />
            </InfoCard>
          </Carousel>
        </Row>
        <UserRow $top={30}>
          <UserBubble $width={319} $end={38}>See Warnings</UserBubble>
        </UserRow>

        <Time $top={50.900} $shift={46}>9:44 AM</Time>
        <Row $top={20.200} $gap={17.700}>
          <Avatar drop={-0.500} />
          <BotBubble $height={154.900} $pad={16}>{"Here are some things to\nwatch out for when you bike\nvia SW Marine Drive:"}</BotBubble>
        </Row>
        <Row $top={13.300} $left={125.800}>
          <InfoCard>
            <Media><OakMap /></Media>
            <InfoBody $height={248} $closed>
              <InfoTitle $tall>Oak St &amp; 45th Avenue intersection</InfoTitle>
              <InfoText $tall>{"5 near-misses, 2 collisions this year\nwith moderate traffic during daytime"}</InfoText>
              <InfoMeta $tall>No designated bike path</InfoMeta>
            </InfoBody>
          </InfoCard>
        </Row>
        <Row $top={14} $gap={14.300}>
          <Avatar drop={-1} />
          <InfoCard>
            <Media><MallMap /></Media>
            <InfoBody $height={247.600} $closed>
              <InfoTitle $tall>{"East Mall & 16th Avenue\nroundabout"}</InfoTitle>
              <InfoText $tall>{"2 near-misses, 1 collisions this year\nwith moderate traffic during daytime"}</InfoText>
              <InfoMeta $tall>No designated bike path</InfoMeta>
            </InfoBody>
          </InfoCard>
        </Row>

        <Time $top={42.800} $shift={41}>11:56 AM</Time>
        <Row $top={20.600}>
          <Avatar drop={-0.800} />
          <Prompt $width={532.400}>
            <PromptText $height={133.600} $pad={15.400}>{"Nicely done! Was this a safe\nride for you?"}</PromptText>
            <Action $height={85.800}>Yes</Action>
            <Action $height={89.300} $last>No</Action>
          </Prompt>
        </Row>
        <UserRow $top={37.200}>
          <UserBubble $width={115.200} $end={29}>No</UserBubble>
        </UserRow>

        <Time $top={42.500} $shift={43}>11:57 AM</Time>
        <Row $top={20.900} $gap={14.300}>
          <Avatar drop={-0.800} />
          <Prompt $width={532.400}>
            <PromptText $height={171.700} $pad={15.400}>{"That's too bad - can you tell\nme about parts of your trip\nthat made you feel unsafe?"}</PromptText>
            <Action $height={86.900} $last>Add Feedback</Action>
          </Prompt>
        </Row>

        <Time $top={45} $shift={44}>12:02 PM</Time>
        <UserRow $top={22.200}>
          <UserBubble $width={339} $end={33.500}>Added 2 reports</UserBubble>
        </UserRow>
        <Row $top={20.700}>
          <Avatar drop={-2.600} />
          <BotBubble $height={142.500} $pad={20}>{"Perfect! Thank you for your\nfeedback!"}</BotBubble>
        </Row>
      </Screen>
    </>
  );
}
